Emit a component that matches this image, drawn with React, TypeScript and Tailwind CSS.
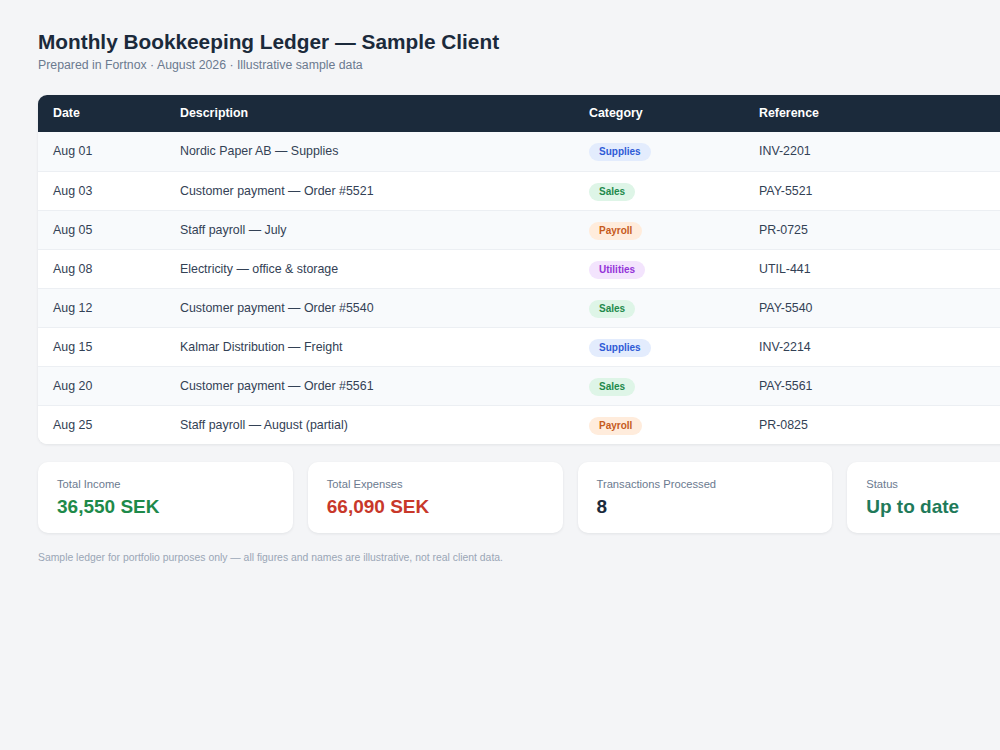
import React from "react";

type Cat = "Supplies" | "Sales" | "Payroll" | "Utilities";

const rows: { date: string; desc: string; cat: Cat; ref: string }[] = [
  { date: "Aug 01", desc: "Nordic Paper AB — Supplies", cat: "Supplies", ref: "INV-2201" },
  { date: "Aug 03", desc: "Customer payment — Order #5521", cat: "Sales", ref: "PAY-5521" },
  { date: "Aug 05", desc: "Staff payroll — July", cat: "Payroll", ref: "PR-0725" },
  { date: "Aug 08", desc: "Electricity — office & storage", cat: "Utilities", ref: "UTIL-441" },
  { date: "Aug 12", desc: "Customer payment — Order #5540", cat: "Sales", ref: "PAY-5540" },
  { date: "Aug 15", desc: "Kalmar Distribution — Freight", cat: "Supplies", ref: "INV-2214" },
  { date: "Aug 20", desc: "Customer payment — Order #5561", cat: "Sales", ref: "PAY-5561" },
  { date: "Aug 25", desc: "Staff payroll — August (partial)", cat: "Payroll", ref: "PR-0825" },
];

const badge: Record<Cat, string> = {
  Supplies: "bg-[#e3ecfd] text-[#2f5bd6]",
  Sales: "bg-[#def5e7] text-[#1f8a4c]",
  Payroll: "bg-[#ffecdc] text-[#c65a1c]",
  Utilities: "bg-[#f3e4fd] text-[#9333d8]",
};

export default function App() {
  return (
    <div
      className="min-h-screen w-full overflow-hidden bg-[#f4f5f7] text-[#334155]"
      style={{ fontFamily: '"Liberation Sans", Arial, sans-serif' }}
    >
      <div className="w-[1064px] ml-[38px] pt-[29px] pb-10">
        <h1 className="text-[20.8px] leading-[26px] font-bold text-[#1b2a3b]">
          Monthly Bookkeeping Ledger — Sample Client
        </h1>
        <p className="mt-[2px] text-[12.3px] leading-[16px] text-[#6b7a8f]">
          Prepared in Fortnox · August 2026 · Illustrative sample data
        </p>

        <div className="mt-[22px] rounded-[9px] overflow-hidden bg-white shadow-[0_1px_3px_rgba(15,23,42,0.08)]">
          <table className="w-full border-collapse text-[12.4px]">
            <thead>
              <tr className="bg-[#1b2a3b] text-white h-[37px]">
                <th className="w-[127px] pl-[15px] text-left font-bold">Date</th>
                <th className="w-[409px] pl-[15px] text-left font-bold">Description</th>
                <th className="w-[170px] pl-[15px] text-left font-bold">Category</th>
                <th className="w-[170px] pl-[15px] text-left font-bold">Reference</th>
                <th className="pr-[15px]"></th>
              </tr>
            </thead>
            <tbody>
              {rows.map((r, i) => (
                <tr
                  key={r.ref}
                  className={`h-[39px] ${i % 2 === 0 ? "bg-[#f8fafc]" : "bg-white"} ${
                    i < rows.length - 1 ? "border-b border-[#eceff3]" : ""
                  }`}
                >
                  <td className="pl-[15px] pt-[1px]">{r.date}</td>
                  <td className="pl-[15px] pt-[1px]">{r.desc}</td>
                  <td className="pl-[15px] pt-[1px]">
                    <span
                      className={`inline-block rounded-full px-[10px] py-[3px] text-[10px] leading-[12px] font-bold ${badge[r.cat]}`}
                    >
                      {r.cat}
                    </span>
                  </td>
                  <td className="pl-[15px] pt-[1px]">{r.ref}</td>
                  <td className="pr-[15px]"></td>
                </tr>
              ))}
            </tbody>
          </table>
        </div>

        <div className="mt-[18px] grid grid-cols-4 gap-[15px]">
          {[
            { label: "Total Income", value: "36,550 SEK", color: "text-[#1e8a4a]" },
            { label: "Total Expenses", value: "66,090 SEK", color: "text-[#c8382a]" },
            { label: "Transactions Processed", value: "8", color: "text-[#1b2a3b]" },
            { label: "Status", value: "Up to date", color: "text-[#1f7a5a]" },
          ].map((c) => (
            <div
              key={c.label}
              className="h-[71px] rounded-[10px] bg-white px-[19px] pt-[15px] shadow-[0_1px_3px_rgba(15,23,42,0.08)]"
            >
              <div className="text-[11.2px] leading-[14px] text-[#6b7a8f]">{c.label}</div>
              <div className={`mt-[4px] text-[19px] leading-[23px] font-bold ${c.color}`}>{c.value}</div>
            </div>
          ))}
        </div>

        <p className="mt-[18px] text-[10.4px] leading-[14px] text-[#9aa6b6]">
          Sample ledger for portfolio purposes only — all figures and names are illustrative, not real client data.
        </p>
      </div>
    </div>
  );
}
